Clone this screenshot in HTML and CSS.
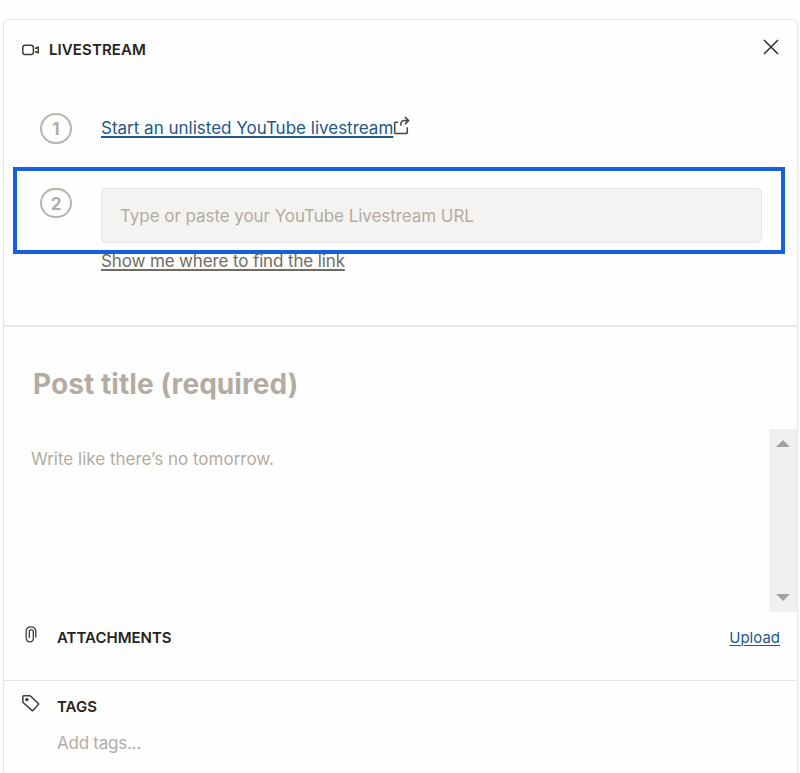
FILE: index.html
```html
<!DOCTYPE html>
<html lang="en">
<head>
<meta charset="utf-8">
<title>Livestream</title>
<link rel="stylesheet" href="styles.css">
</head>
<body>
<main class="card">
  <section class="stream">
    <header class="header">
      <svg class="camera" width="19" height="12" viewBox="0 0 19 12" fill="none" stroke="#403d34" stroke-width="1.5"><rect x=".8" y="1.2" width="10.6" height="9.4" rx="2.3"/><path d="M13 4.3h1.4q.2-1.1 1.1-1.1h.8v5.6h-.8q-.9 0-1.1-1.1H13"/></svg>
      <h1 class="label label-live">LIVESTREAM</h1>
      <svg class="close" width="16" height="16" viewBox="0 0 16 16" fill="none" stroke="#302e27" stroke-width="1.5"><path d="M1 1 15 15M15 1 1 15"/></svg>
    </header>
    <div class="step step-one">
      <span class="number">1</span>
      <a class="link start">Start an unlisted YouTube livestream</a>
      <svg class="external" width="17" height="19" viewBox="0 0 17 19" fill="none" stroke="#47443b" stroke-width="1.5" stroke-linejoin="round"><path d="M5 6.3H2.4a.7.7 0 0 0-.7.7v9.8q0 .7.7.7h11.2q.7 0 .7-.7v-5.5"/><path d="M7.9 9.8V8q0-3.4 3.4-3.4h4.2M12 1l3.6 3.6L12 8.1"/></svg>
    </div>
    <div class="step step-two">
      <span class="number number-two">2</span>
      <div class="field"><span class="placeholder url">Type or paste your YouTube Livestream URL</span></div>
      <div class="highlight"></div>
    </div>
    <a class="link help">Show me where to find the link</a>
  </section>
  <section class="post">
    <h2 class="title"><span>Post title (required)</span></h2>
    <div class="editor">
      <p class="placeholder write">Write like there’s no tomorrow.</p>
      <div class="scrollbar"><i class="up"></i><i class="down"></i></div>
    </div>
    <div class="attachments">
      <svg class="clip" width="12" height="17" viewBox="0 0 12 17" fill="none" stroke="#403d34" stroke-width="1.3" stroke-linecap="round"><path d="M10.8 11V5.3C10.8 2.5 8.8.9 6 .9S1.2 2.5 1.2 5.3v6.2C1.2 14 2.8 15.8 5 15.8s3.3-1.5 3.3-3.5V5.6c0-2.4-4-2.4-4 0v6"/></svg>
      <h3 class="label label-attach">ATTACHMENTS</h3>
      <a class="link upload">Upload</a>
    </div>
  </section>
  <section class="tags">
    <svg class="tag" width="18" height="17" viewBox="0 0 18 17" fill="none" stroke="#403d34" stroke-width="1.5" stroke-linejoin="round"><path d="M1.6.8h6.2q.5 0 .9.4l7.7 7.3q.5.5 0 1l-5.5 5.9q-.5.5-1 0L1.4 7.8Q.9 7.4.9 6.8V1.5q0-.7.7-.7Z"/><circle cx="4.9" cy="4.6" r="1.7" fill="#403d34" stroke="none"/></svg>
    <div>
      <h3 class="label label-tags">TAGS</h3>
      <p class="placeholder add">Add tags...</p>
    </div>
  </section>
</main>
</body>
</html>
```
FILE: styles.css
```css
* { box-sizing: border-box; }
body { margin: 0; height: 773px; overflow: hidden; background: #fefefe; font-family: Inter, "Liberation Sans", sans-serif; font-size: 17px; line-height: 24px; color: #25231c; }
h1, h2, h3, p { margin: 0; }
svg { display: block; flex: none; }
.card { margin: 19px 2px 0 3px; height: 780px; border: 1px solid #e7e6e4; border-radius: 5px; }
.stream { height: 307px; border-bottom: 2px solid #e7e9e8; }
.header { display: flex; align-items: center; height: 42px; padding: 18px 18px 0 18px; }
.camera { margin-right: 8px; margin-top: -1px; }
.close { margin-left: auto; margin-top: -6px; }
.label { font-size: 15px; font-weight: 600; line-height: 24px; white-space: nowrap; }
.label-live { letter-spacing: 0.1px; }
.step { display: flex; }
.step-one { align-items: center; margin: 51px 0 0 36px; height: 31px; }
.step-two { position: relative; margin: 44px 35px 0 36px; height: 55px; }
.number { display: flex; flex: none; align-items: center; justify-content: center; width: 32px; height: 31px; margin-right: 29px; border: 2px solid #b7b3aa; border-radius: 16px; color: #b2aca2; font-size: 17px; font-weight: 700; padding-top: 1px; }
.number-two { height: 30px; padding-top: 2px; }
.link { color: #22588a; white-space: nowrap; text-decoration: underline; text-decoration-thickness: 1.5px; text-underline-offset: 2px; }
.start { margin-top: -2px; }
.external { margin-top: -7px; }
.field { flex: 1; display: flex; align-items: center; padding-left: 18px; border: 1px solid #e5e4e1; border-radius: 5px; background: #f4f3f2; }
.placeholder { color: #b2aca2; white-space: nowrap; }
.url { letter-spacing: -0.06px; }
.highlight { position: absolute; left: -27px; top: -21px; width: 772px; height: 87px; border: 4px solid #1460e0; }
.help { display: block; width: max-content; margin: 6px 0 0 97px; color: #706c62; letter-spacing: -0.13px; }
.title { padding: 36px 0 0 29px; font-size: 28px; line-height: 42px; font-weight: 700; letter-spacing: 0.07px; color: #b2aca2; white-space: nowrap; }
.editor { display: flex; justify-content: space-between; margin-top: 24px; height: 183px; }
.write { padding: 18px 0 0 27px; }
.scrollbar { display: flex; flex-direction: column; justify-content: space-between; align-items: center; width: 28px; padding: 11px 0; background: #f0f0f0; }
.up, .down { border-left: 7px solid transparent; border-right: 7px solid transparent; }
.up { border-bottom: 7px solid #a3a3a3; }
.down { border-top: 7px solid #a3a3a3; }
.attachments { display: flex; height: 68px; padding: 14px 17px 0 21px; }
.clip { margin-right: 20px; }
.upload { margin-left: auto; font-size: 15px; text-decoration-thickness: 1px; }
.tags { display: flex; gap: 17px; padding: 14px 0 0 18px; border-top: 1px solid #e7e6e4; }
.add { margin-top: 12px; letter-spacing: -0.25px; }
```
